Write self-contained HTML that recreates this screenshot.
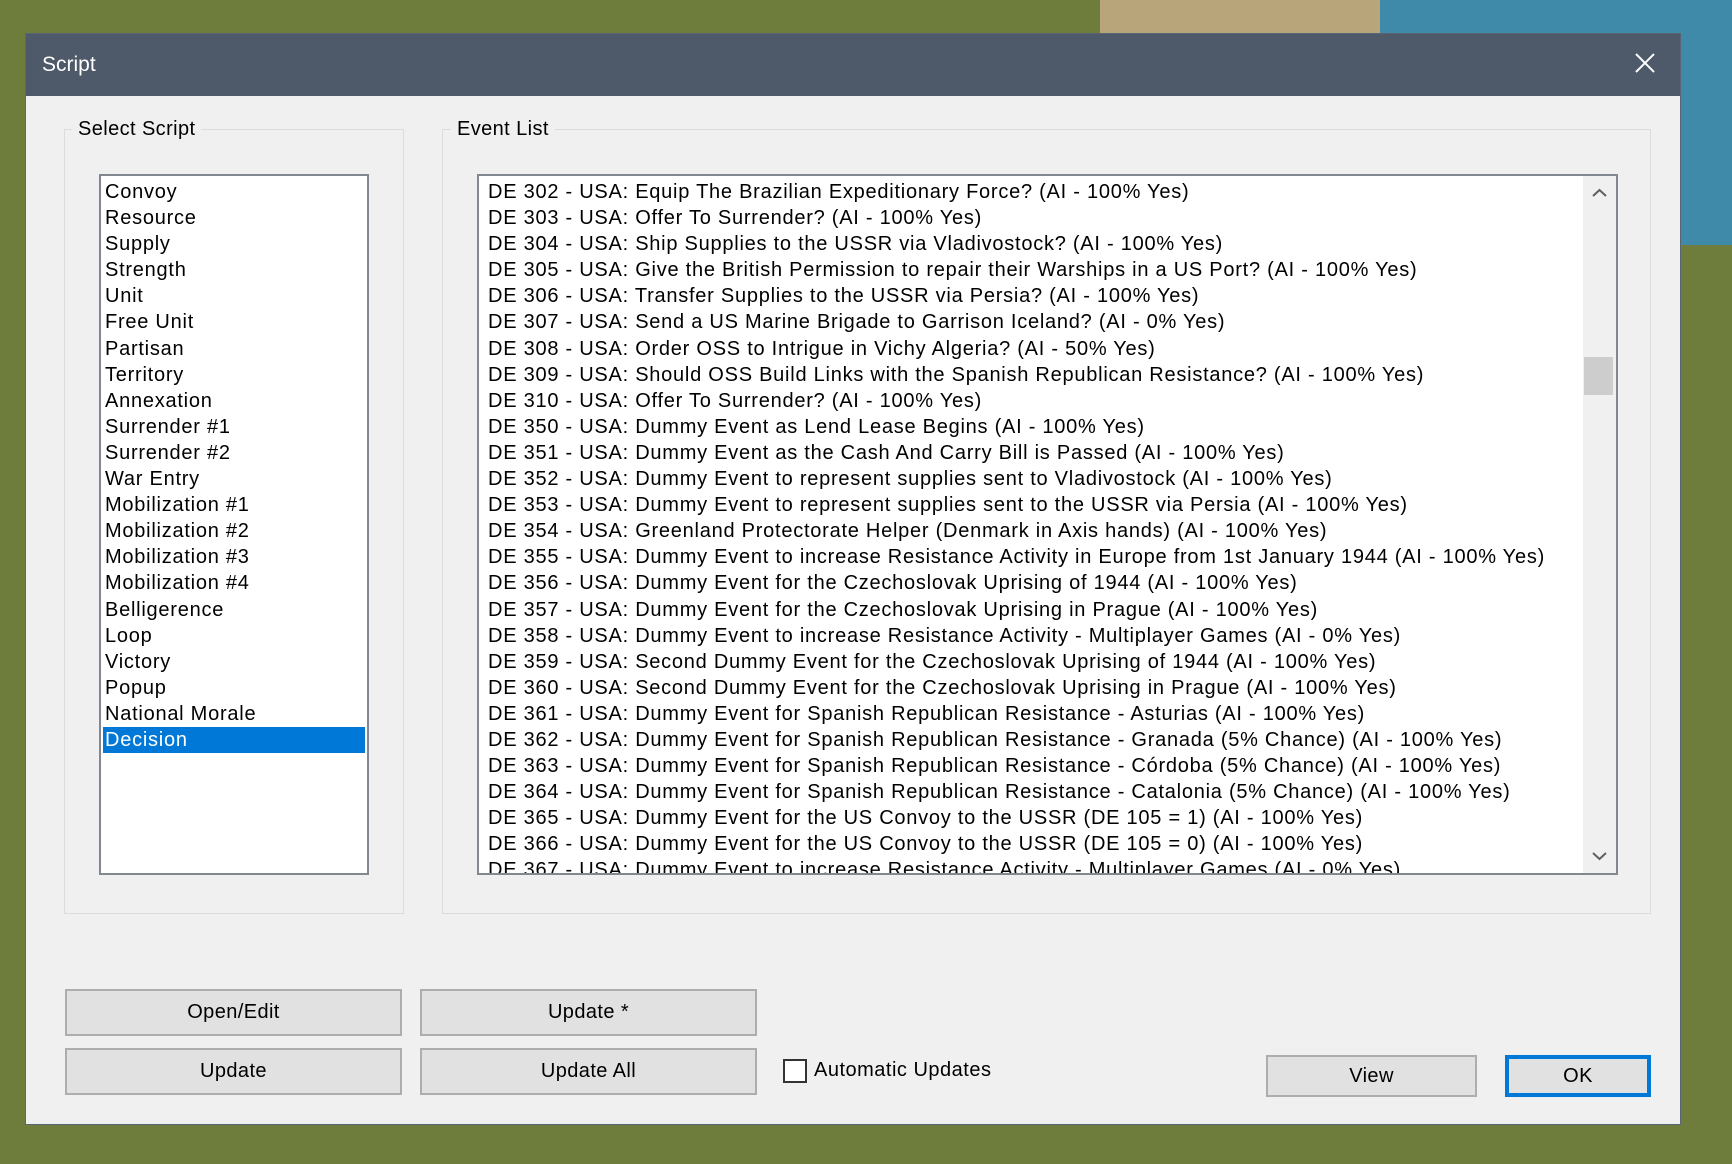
<!DOCTYPE html>
<html><head><meta charset="utf-8"><style>
*{margin:0;padding:0;box-sizing:border-box}
body{width:1732px;height:1164px;overflow:hidden;position:relative;font-family:"Liberation Sans",sans-serif;background:#6f7d3c}
.bgw{position:absolute;left:1100px;top:0;width:632px;height:36px;background:#b9a57a}
.bgb{position:absolute;left:1380px;top:0;width:352px;height:245px;background:#3f8aa8}
.d{position:absolute;left:25px;top:33px;width:1656px;height:1092px;background:#f0f0f0;border:1px solid #5a6573}
.t{position:absolute;left:0;top:0;width:100%;height:62px;background:#4e5a69;color:#fff;font-size:21px;line-height:62px;padding-left:16px}
.x{position:absolute;right:20px;top:14px;width:30px;height:30px}
.a{position:absolute;font-size:20px;color:#000;white-space:nowrap;letter-spacing:0.5px}
.g{position:absolute;border:1px solid #dcdcdc}
.gl{position:absolute;background:#f0f0f0;padding:0 6px;font-size:20px;line-height:24px;letter-spacing:0.4px}
.lb{position:absolute;background:#fff;border:2px solid #828790;overflow:hidden}
.r{height:26.1px;line-height:26px;font-size:20px;padding-left:4px;white-space:nowrap;letter-spacing:0.75px}
.btn{position:absolute;background:#e1e1e1;border:2px solid #adadad;font-size:20px;text-align:center;letter-spacing:0.4px}
</style></head><body>
<div class="bgw"></div><div class="bgb"></div>
<div class="d">
<div class="t">Script<svg class="x" viewBox="0 0 30 30"><path d="M6 6L24 24M24 6L6 24" stroke="#fff" stroke-width="2"/></svg></div>
<div class="g" style="left:38px;top:95px;width:340px;height:785px"></div>
<div class="gl" style="left:46px;top:83px">Select Script</div>
<div class="g" style="left:416px;top:95px;width:1209px;height:785px"></div>
<div class="gl" style="left:425px;top:83px">Event List</div>
<div class="lb" style="left:73px;top:140px;width:270px;height:701px;padding-top:3px">
<div class="r">Convoy</div><div class="r">Resource</div><div class="r">Supply</div><div class="r">Strength</div><div class="r">Unit</div><div class="r">Free Unit</div><div class="r">Partisan</div><div class="r">Territory</div><div class="r">Annexation</div><div class="r">Surrender #1</div><div class="r">Surrender #2</div><div class="r">War Entry</div><div class="r">Mobilization #1</div><div class="r">Mobilization #2</div><div class="r">Mobilization #3</div><div class="r">Mobilization #4</div><div class="r">Belligerence</div><div class="r">Loop</div><div class="r">Victory</div><div class="r">Popup</div><div class="r">National Morale</div><div class="r" style="background:#0078d7;color:#fff;margin:0 2px;padding-left:2px">Decision</div>
</div>
<div class="lb" style="left:451px;top:140px;width:1141px;height:701px;padding-top:3px">
<div style="padding-left:5px">
<div class="r">DE 302 - USA: Equip The Brazilian Expeditionary Force? (AI - 100% Yes)</div>
<div class="r">DE 303 - USA: Offer To Surrender? (AI - 100% Yes)</div>
<div class="r">DE 304 - USA: Ship Supplies to the USSR via Vladivostock? (AI - 100% Yes)</div>
<div class="r">DE 305 - USA: Give the British Permission to repair their Warships in a US Port? (AI - 100% Yes)</div>
<div class="r">DE 306 - USA: Transfer Supplies to the USSR via Persia? (AI - 100% Yes)</div>
<div class="r">DE 307 - USA: Send a US Marine Brigade to Garrison Iceland? (AI - 0% Yes)</div>
<div class="r">DE 308 - USA: Order OSS to Intrigue in Vichy Algeria? (AI - 50% Yes)</div>
<div class="r">DE 309 - USA: Should OSS Build Links with the Spanish Republican Resistance? (AI - 100% Yes)</div>
<div class="r">DE 310 - USA: Offer To Surrender? (AI - 100% Yes)</div>
<div class="r">DE 350 - USA: Dummy Event as Lend Lease Begins (AI - 100% Yes)</div>
<div class="r">DE 351 - USA: Dummy Event as the Cash And Carry Bill is Passed (AI - 100% Yes)</div>
<div class="r">DE 352 - USA: Dummy Event to represent supplies sent to Vladivostock (AI - 100% Yes)</div>
<div class="r">DE 353 - USA: Dummy Event to represent supplies sent to the USSR via Persia (AI - 100% Yes)</div>
<div class="r">DE 354 - USA: Greenland Protectorate Helper (Denmark in Axis hands) (AI - 100% Yes)</div>
<div class="r">DE 355 - USA: Dummy Event to increase Resistance Activity in Europe from 1st January 1944 (AI - 100% Yes)</div>
<div class="r">DE 356 - USA: Dummy Event for the Czechoslovak Uprising of 1944 (AI - 100% Yes)</div>
<div class="r">DE 357 - USA: Dummy Event for the Czechoslovak Uprising in Prague (AI - 100% Yes)</div>
<div class="r">DE 358 - USA: Dummy Event to increase Resistance Activity - Multiplayer Games (AI - 0% Yes)</div>
<div class="r">DE 359 - USA: Second Dummy Event for the Czechoslovak Uprising of 1944 (AI - 100% Yes)</div>
<div class="r">DE 360 - USA: Second Dummy Event for the Czechoslovak Uprising in Prague (AI - 100% Yes)</div>
<div class="r">DE 361 - USA: Dummy Event for Spanish Republican Resistance - Asturias (AI - 100% Yes)</div>
<div class="r">DE 362 - USA: Dummy Event for Spanish Republican Resistance - Granada (5% Chance) (AI - 100% Yes)</div>
<div class="r">DE 363 - USA: Dummy Event for Spanish Republican Resistance - Córdoba (5% Chance) (AI - 100% Yes)</div>
<div class="r">DE 364 - USA: Dummy Event for Spanish Republican Resistance - Catalonia (5% Chance) (AI - 100% Yes)</div>
<div class="r">DE 365 - USA: Dummy Event for the US Convoy to the USSR (DE 105 = 1) (AI - 100% Yes)</div>
<div class="r">DE 366 - USA: Dummy Event for the US Convoy to the USSR (DE 105 = 0) (AI - 100% Yes)</div>
<div class="r">DE 367 - USA: Dummy Event to increase Resistance Activity - Multiplayer Games (AI - 0% Yes)</div>
</div>
<div style="position:absolute;right:0;top:0;width:33px;height:100%;background:#f0f0f0">
<svg style="position:absolute;left:9px;top:12px" width="15" height="10" viewBox="0 0 15 10"><path d="M1 8L7.5 2L14 8" fill="none" stroke="#606060" stroke-width="2"/></svg>
<div style="position:absolute;left:1px;top:181px;width:29px;height:38px;background:#cdcdcd"></div>
<svg style="position:absolute;left:9px;bottom:12px" width="15" height="10" viewBox="0 0 15 10"><path d="M1 2L7.5 8L14 2" fill="none" stroke="#606060" stroke-width="2"/></svg>
</div>
</div>
<div class="btn" style="left:39px;top:955px;width:337px;height:47px;line-height:43px">Open/Edit</div>
<div class="btn" style="left:39px;top:1014px;width:337px;height:47px;line-height:43px">Update</div>
<div class="btn" style="left:394px;top:955px;width:337px;height:47px;line-height:43px">Update *</div>
<div class="btn" style="left:394px;top:1014px;width:337px;height:47px;line-height:43px">Update All</div>
<div style="position:absolute;left:757px;top:1025px;width:24px;height:24px;border:2px solid #333;background:#fff"></div>
<div class="a" style="left:788px;top:1025px">Automatic Updates</div>
<div class="btn" style="left:1240px;top:1021px;width:211px;height:42px;line-height:38px">View</div>
<div class="btn" style="left:1479px;top:1021px;width:146px;height:42px;line-height:34px;border:4px solid #0078d7">OK</div>
</div>
</body></html>
